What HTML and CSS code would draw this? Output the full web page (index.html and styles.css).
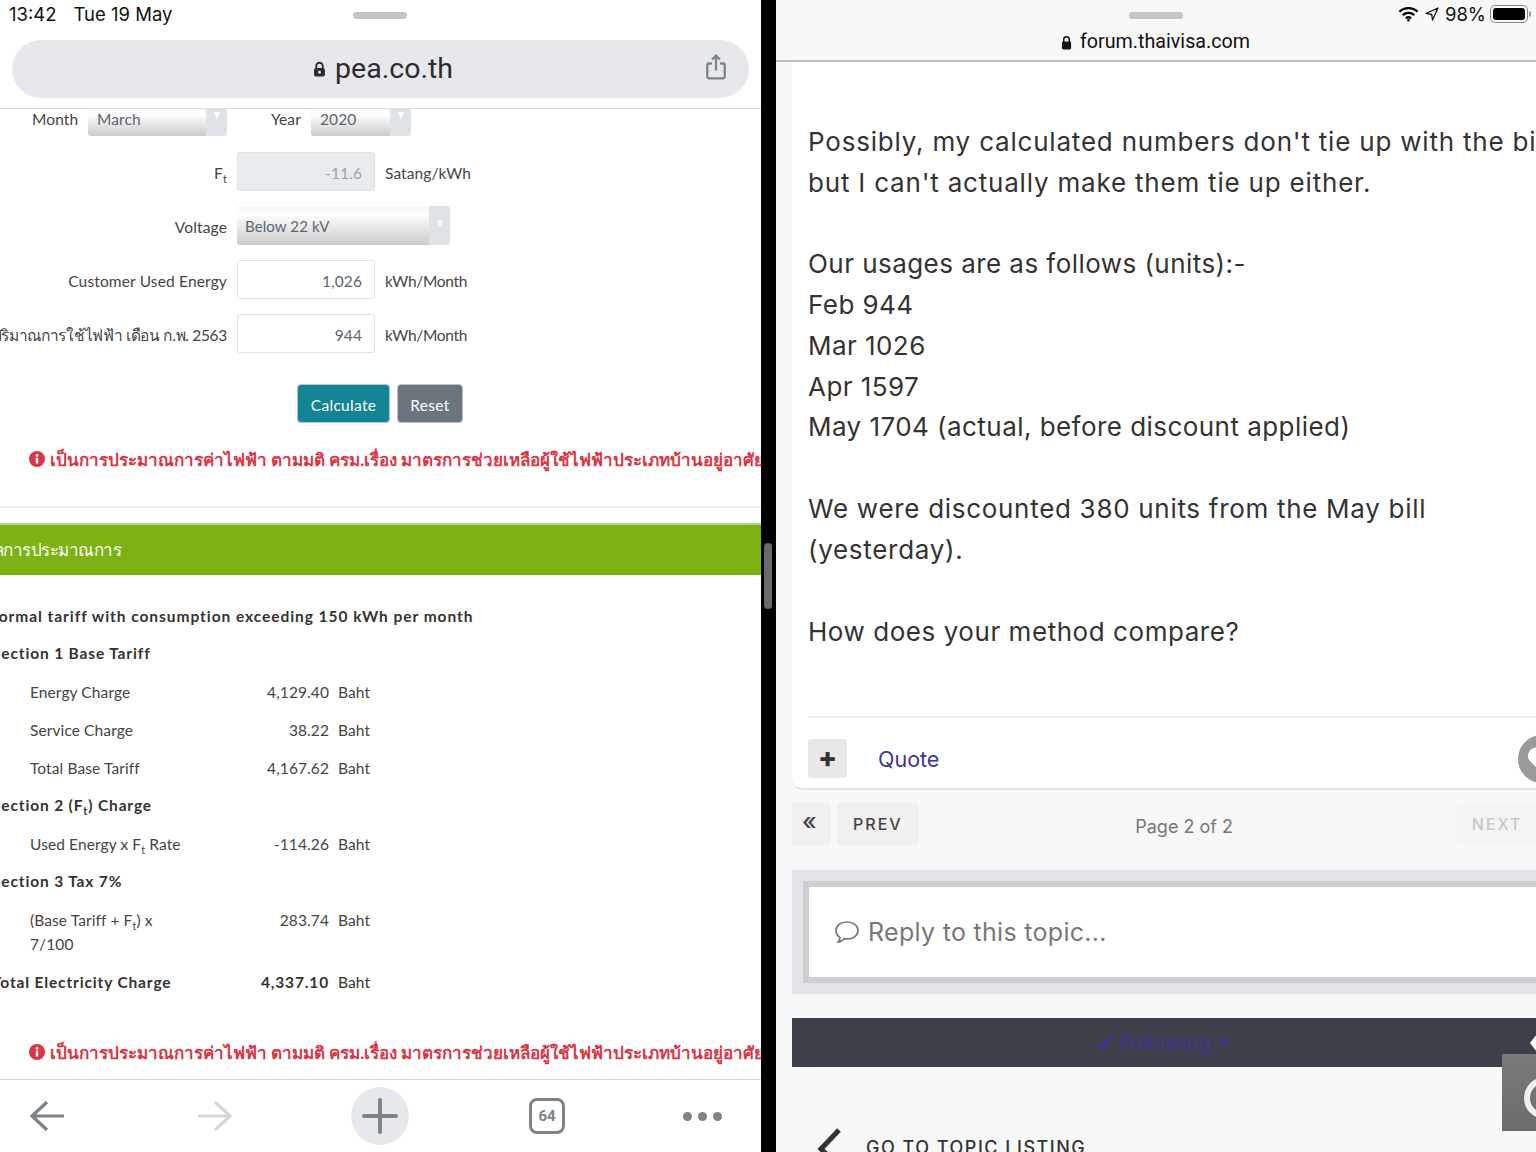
FILE: index.html
```html
<!DOCTYPE html>
<html lang="en">
<head>
  <meta charset="UTF-8">
  <title>Split view</title>
  <link rel="stylesheet" href="styles.css">
</head>
<body>
  <div class="screen">

    <section class="pane-left">
      <header class="left-head">
        <div class="status-left">
          <span class="clock">13:42</span>
          <span class="clock">Tue 19 May</span>
          <span class="grabber"></span>
        </div>
        <div class="url-bar">
          <span class="url-text">
            <svg class="lock-big" viewBox="0 0 12 14"><path d="M3 6V4.200a3 3 0 0 1 6 0V6" fill="none" stroke="#2c2c2e" stroke-width="1.700"/><rect x="1" y="6" width="10" height="8" rx="1.600" fill="#2c2c2e"/><circle cx="6" cy="10" r="1.300" fill="#e6e8ec"/></svg>
            pea.co.th
          </span>
          <svg class="share" viewBox="0 0 24 32"><path d="M7.500 12H3.500a1.500 1.500 0 0 0-1.500 1.500v14A1.500 1.500 0 0 0 3.500 29h17a1.500 1.500 0 0 0 1.500-1.500v-14A1.500 1.500 0 0 0 20.500 12H16.500M12 20V3M7.500 7.500 12 3l4.500 4.500" fill="none" stroke="#7c8487" stroke-width="2.600"/></svg>
        </div>
      </header>

      <main class="left-body">
        <div class="month-row">
          <span class="month-label">Month</span>
          <span class="select select-month">March</span>
          <span class="year-label">Year</span>
          <span class="select select-year">2020</span>
        </div>

        <div class="form-row form-row-first">
          <label class="form-label"><span>F<sub>t</sub></span></label>
          <span class="input input-off">-11.6</span>
          <span class="form-unit">Satang/kWh</span>
        </div>
        <div class="form-row">
          <label class="form-label"><span>Voltage</span></label>
          <span class="select select-voltage">Below 22 kV</span>
        </div>
        <div class="form-row">
          <label class="form-label"><span>Customer Used Energy</span></label>
          <span class="input">1,026</span>
          <span class="form-unit form-unit-month">kWh/Month</span>
        </div>
        <div class="form-row">
          <label class="form-label form-label-thai"><span>ปริมาณการใช้ไฟฟ้า เดือน ก.พ. 2563</span></label>
          <span class="input">944</span>
          <span class="form-unit form-unit-month">kWh/Month</span>
        </div>

        <div class="actions">
          <button class="btn btn-teal">Calculate</button>
          <button class="btn btn-grey">Reset</button>
        </div>

        <p class="warn warn-top">
          <svg class="warn-icon" viewBox="0 0 16 16"><circle cx="8" cy="8" r="8" fill="#dc3545"/><rect x="6.800" y="6.800" width="2.400" height="5.700" fill="#fff"/><circle cx="8" cy="4.500" r="1.400" fill="#fff"/></svg>
          เป็นการประมาณการค่าไฟฟ้า ตามมติ ครม.เรื่อง มาตรการช่วยเหลือผู้ใช้ไฟฟ้าประเภทบ้านอยู่อาศัย
        </p>
        <div class="rule"></div>

        <div class="result-head">ผลการประมาณการ</div>

        <div class="result">
          <div class="result-title">Normal tariff with consumption exceeding 150 kWh per month</div>
          <div class="result-sub">Section 1 Base Tariff</div>
          <div class="line"><span class="line-name">Energy Charge</span><span class="line-val">4,129.40</span><span>Baht</span></div>
          <div class="line"><span class="line-name">Service Charge</span><span class="line-val">38.22</span><span>Baht</span></div>
          <div class="line"><span class="line-name">Total Base Tariff</span><span class="line-val">4,167.62</span><span>Baht</span></div>
          <div class="result-sub">Section 2 (F<sub>t</sub>) Charge</div>
          <div class="line"><span class="line-name">Used Energy x F<sub>t</sub> Rate</span><span class="line-val">-114.26</span><span>Baht</span></div>
          <div class="result-sub">Section 3 Tax 7%</div>
          <div class="line line-tall"><span class="line-name">(Base Tariff + F<sub>t</sub>) x<br>7/100</span><span class="line-val">283.74</span><span>Baht</span></div>
          <div class="result-sub result-total"><span class="total-name">Total Electricity Charge</span><span class="line-val">4,337.10</span><span class="total-unit">Baht</span></div>
        </div>

        <p class="warn warn-bottom">
          <svg class="warn-icon" viewBox="0 0 16 16"><circle cx="8" cy="8" r="8" fill="#dc3545"/><rect x="6.800" y="6.800" width="2.400" height="5.700" fill="#fff"/><circle cx="8" cy="4.500" r="1.400" fill="#fff"/></svg>
          เป็นการประมาณการค่าไฟฟ้า ตามมติ ครม.เรื่อง มาตรการช่วยเหลือผู้ใช้ไฟฟ้าประเภทบ้านอยู่อาศัย
        </p>
      </main>

      <footer class="toolbar">
        <svg class="tool" viewBox="0 0 38 34"><path d="M35 17H4M18 3 3 17l15 14" fill="none" stroke="#7c8487" stroke-width="3.200"/></svg>
        <svg class="tool" viewBox="0 0 38 34"><path d="M3 17h31M20 3l15 14-15 14" fill="none" stroke="#d5d7d8" stroke-width="3.200"/></svg>
        <span class="plus-circle">
          <svg class="plus-icon" viewBox="0 0 36 36"><path d="M18 2v32M2 18h32" fill="none" stroke="#7c8487" stroke-width="4" stroke-linecap="round"/></svg>
        </span>
        <span class="tab-count">64</span>
        <span class="dots"><i></i><i></i><i></i></span>
      </footer>
    </section>

    <div class="divider"><span class="divider-handle"></span></div>

    <section class="pane-right">
      <header class="right-head">
        <span class="grabber grabber-right"></span>
        <div class="status-right">
          <svg class="wifi" viewBox="0 0 22 16"><path d="M1.500 5.500a14 14 0 0 1 19 0M5 9.200a9 9 0 0 1 12 0M8.300 12.500a4.200 4.200 0 0 1 5.400 0" fill="none" stroke="#000" stroke-width="2.400"/><circle cx="11" cy="14.600" r="1.300"/></svg>
          <svg class="loc" viewBox="0 0 14 14"><path d="M13 1 1 6.500l5.700.8.800 5.700z" fill="none" stroke="#000" stroke-width="1.200" stroke-linejoin="round"/></svg>
          <span class="clock">98%</span>
          <span class="battery"><i></i></span>
        </div>
        <div class="site">
          <svg class="lock-small" viewBox="0 0 12 15"><path d="M3 7V4.200a3 3 0 0 1 6 0V7" fill="none" stroke="#111" stroke-width="1.600"/><rect x="1" y="6.500" width="10" height="8.500" rx="1.500" fill="#111"/></svg>
          forum.thaivisa.com
        </div>
      </header>

      <main class="right-body">
        <article class="post">
          <div class="post-text">
            <p class="para-wide">Possibly, my calculated numbers don't tie up with the bill<br>but I can't actually make them tie up either.</p>
            <p class="para-tight">Our usages are as follows (units):-<br>Feb 944<br>Mar 1026<br>Apr 1597<br>May 1704 (actual, before discount applied)</p>
            <p class="para-mid">We were discounted 380 units from the May bill<br>(yesterday).</p>
            <p>How does your method compare?</p>
          </div>
          <div class="post-foot">
            <span class="plus-btn">+</span>
            <a class="quote">Quote</a>
            <span class="like"><svg class="heart" viewBox="0 0 24 22"><path d="M12 21 3 11.500a5.800 5.800 0 0 1 9-7 5.800 5.800 0 0 1 9 7z" fill="#fff"/></svg></span>
          </div>
        </article>

        <nav class="pager">
          <span class="page-btn page-first">«</span>
          <span class="page-btn">PREV</span>
          <span class="page-count">Page 2 of 2</span>
          <span class="page-btn page-next">NEXT</span>
        </nav>

        <div class="reply-wrap">
          <div class="reply-box">
            <svg class="bubble" viewBox="0 0 26 24"><path d="M13 2c6.500 0 11 3.600 11 8.500S19.500 19 13 19c-1 0-2-.1-3-.3C8.500 20.500 6.500 22 4 22c1.300-1.300 2-2.800 2-4.600-2.600-1.500-4-4-4-6.900C2 5.600 6.500 2 13 2z" fill="none" stroke="#777" stroke-width="1.700"/></svg>
            Reply to this topic...
          </div>
        </div>

        <div class="follow-bar">
          <span class="follow">
            <svg class="follow-check" viewBox="0 0 16 14"><path d="M1.500 7.500 6 12 14.500 2" fill="none" stroke="#3d3694" stroke-width="3.400"/></svg>
            Following
            <span class="follow-caret"></span>
          </span>
          <span class="follow-tip"></span>
        </div>

        <div class="back-link">
          <svg class="back-chevron" viewBox="0 0 26 40"><path d="M23 3 5 22l18 17" fill="none" stroke="#333" stroke-width="5"/></svg>
          <span class="back-text">GO TO TOPIC LISTING</span>
        </div>
      </main>

      <div class="float-box"><span class="float-circle"></span></div>
    </section>
  </div>
</body>
</html>
```

FILE: styles.css
```css
html, body {
  margin: 0;
  padding: 0;
  height: 100%;
  overflow: hidden;
}

body {
  font-family: "Lato", "Noto Sans", "DejaVu Sans", sans-serif;
  color: #333;
  background: #000;
}

.screen {
  display: flex;
  width: 1536px;
  height: 1152px;
}

/* left pane */

.pane-left {
  width: 761px;
  height: 1152px;
  display: flex;
  flex-direction: column;
  overflow: hidden;
  background: #fff;
  flex: none;
}

.left-head {
  height: 108px;
  border-bottom: 1px solid #dcdcdc;
  padding: 0 12px;
  flex: none;
}

.status-left {
  display: flex;
  gap: 17px;
  height: 40px;
  margin-left: -3px;
  padding-top: 3px;
  box-sizing: border-box;
}

.clock {
  font-family: "Inter", "Roboto", sans-serif;
  font-size: 18.500px;
  line-height: 22px;
  color: #111;
}

.grabber {
  position: absolute;
  left: 353px;
  top: 12px;
  width: 54px;
  height: 7px;
  border-radius: 4px;
  background: #c4c4c6;
}

.url-bar {
  height: 58px;
  width: 737px;
  border-radius: 29px;
  background: #e6e8ec;
  display: flex;
  align-items: center;
  justify-content: center;
  position: relative;
}

.url-text {
  display: flex;
  align-items: center;
  gap: 9px;
  font-family: "Roboto", sans-serif;
  font-size: 28.500px;
  line-height: 56px;
  margin-left: 5px;
  color: #2c2c2e;
}

.lock-big {
  width: 13px;
  height: 16px;
}

.share {
  position: absolute;
  right: 21px;
  top: 13px;
  width: 24px;
  height: 28px;
}

.left-body {
  flex: 1;
  overflow: hidden;
  font-size: 15.500px;
  letter-spacing: 0.100px;
  color: #444;
}

.month-row {
  display: flex;
  height: 27px;
  padding-left: 32px;
  line-height: 20px;
}

.month-label {
  width: 56px;
}

.year-label {
  width: 40px;
  margin-left: 44px;
}

.select {
  display: flex;
  align-items: center;
  box-sizing: border-box;
  padding-left: 9px;
  color: #5c6670;
  border-radius: 0 0 3px 3px;
  background:
    linear-gradient(#dfe3e8, #dfe3e8) right / 21px 100% no-repeat,
    linear-gradient(#f6f6f6, #fff 20%, #cbcbcb);
  position: relative;
}

.select::after {
  content: "";
  position: absolute;
  right: 7px;
  top: 3px;
  border-left: 3.500px solid transparent;
  border-right: 3.500px solid transparent;
  border-top: 7px solid #fff;
}

.select-month {
  width: 139px;
  height: 27px;
  padding-bottom: 7px;
}

.select-year {
  width: 100px;
  height: 27px;
  padding-bottom: 7px;
}

.select-voltage {
  width: 213px;
  height: 39px;
  border-radius: 3px;
  padding-left: 8px;
  font-size: 15px;
}

.select-voltage::after {
  top: 14px;
}

.form-row {
  display: flex;
  align-items: center;
  height: 39px;
  margin-top: 15px;
}

.form-row-first {
  margin-top: 16px;
}

.form-label {
  width: 227px;
  flex: none;
  display: flex;
  justify-content: flex-end;
  white-space: nowrap;
  margin-right: 10px;
  padding-top: 2px;
  letter-spacing: 0.150px;
}

.form-label-thai {
  letter-spacing: -0.300px;
  padding-top: 3px;
}

.form-label sub,
.line-name sub,
.result-sub sub {
  font-size: 70%;
  line-height: 0;
}

.input {
  width: 138px;
  height: 39px;
  box-sizing: border-box;
  border: 1px solid #dfe3e8;
  border-radius: 3px;
  padding: 2px 12px 0 0;
  display: flex;
  align-items: center;
  justify-content: flex-end;
  color: #5c6670;
}

.input-off {
  background: #e9ecef;
  color: #99a3ad;
}

.form-unit {
  margin-left: 10px;
  padding-top: 2px;
}

.form-unit-month {
  letter-spacing: -0.300px;
}

.actions {
  display: flex;
  gap: 7px;
  margin-top: 31px;
  padding-left: 297px;
}

.btn {
  height: 39px;
  font: inherit;
  letter-spacing: 0.300px;
  color: #fff;
  border: 1px solid #b8c4c8;
  border-radius: 4px;
  padding: 2px 0 0;
}

.btn-teal {
  width: 93px;
  background: #138496;
}

.btn-grey {
  width: 66px;
  background: #6c757d;
}

.warn {
  margin: 0;
  display: flex;
  align-items: center;
  gap: 5px;
  padding-left: 29px;
  height: 28px;
  white-space: nowrap;
  color: #dc3545;
  font-size: 17px;
  font-weight: 700;
  letter-spacing: 0;
}

.warn-top {
  margin-top: 22px;
}

.warn-icon {
  width: 16px;
  height: 16px;
  flex: none;
}

.rule {
  height: 2px;
  background: #f1f1f1;
  margin-top: 33px;
}

.result-head {
  height: 50px;
  margin-top: 15px;
  border-top: 2px solid #b9d58a;
  background: #7cb212;
  color: #fff;
  font-size: 17px;
  letter-spacing: -0.500px;
  line-height: 50px;
  text-indent: -16px;
  white-space: nowrap;
}

.result {
  display: flex;
  flex-direction: column;
  padding-top: 22px;
}

.result-title {
  height: 38px;
  line-height: 38px;
  font-weight: 700;
  letter-spacing: 0.950px;
  margin-left: -14px;
  color: #333;
  white-space: nowrap;
}

.result-sub {
  height: 38px;
  line-height: 36px;
  font-weight: 700;
  letter-spacing: 0.850px;
  margin-left: -8px;
  color: #333;
}

.line {
  display: flex;
  align-items: center;
  height: 38px;
  padding-left: 30px;
}

.line-name {
  width: 200px;
}

.line-val {
  width: 99px;
  text-align: right;
  margin-right: 9px;
}

.line-tall {
  height: 59px;
  box-sizing: border-box;
  line-height: 24px;
  align-items: flex-start;
  padding-top: 7px;
}

.result-total {
  margin-top: 4px;
  display: flex;
}

.total-name {
  width: 238px;
}

.total-unit {
  font-weight: 400;
  letter-spacing: 0.100px;
}

.warn-bottom {
  margin-top: 36px;
}

.toolbar {
  height: 72px;
  flex: none;
  border-top: 1px solid #d8d8d8;
  display: flex;
  align-items: center;
  background: #fff;
  padding-left: 29px;
}

.tool {
  width: 38px;
  height: 34px;
  margin-right: 128px;
}

.plus-circle {
  width: 58px;
  height: 58px;
  border-radius: 50%;
  background: #e6e8ec;
  display: flex;
  align-items: center;
  justify-content: center;
  margin-left: -10px;
}

.plus-icon {
  width: 36px;
  height: 36px;
}

.tab-count {
  width: 36px;
  height: 36px;
  box-sizing: border-box;
  margin-left: 120px;
  border: 3px solid #7c8487;
  border-radius: 8px;
  display: flex;
  align-items: center;
  justify-content: center;
  font-family: "Roboto", sans-serif;
  font-size: 15px;
  font-weight: 700;
  color: #7c8487;
}

.dots {
  display: flex;
  gap: 6px;
  margin-left: 118px;
}

.dots i {
  width: 9px;
  height: 9px;
  border-radius: 50%;
  background: #7c8487;
}

/* divider */

.divider {
  width: 15px;
  flex: none;
  background: #000;
  position: relative;
}

.divider-handle {
  position: absolute;
  left: 3px;
  top: 543px;
  width: 8px;
  height: 66px;
  border-radius: 4px;
  background: #6a6a6a;
}

/* right pane */

.pane-right {
  flex: 1;
  min-width: 0;
  position: relative;
  overflow: hidden;
  background: #f7f8fa;
}

.right-head {
  height: 60px;
  border-bottom: 2px solid #c0c0c0;
  background: #f8f8f8;
  position: relative;
}

.grabber-right {
  left: 353px;
}

.status-right {
  position: absolute;
  right: 3px;
  top: 3px;
  display: flex;
  align-items: center;
  gap: 6px;
}

.wifi {
  width: 21px;
  height: 16px;
}

.loc {
  width: 14px;
  height: 14px;
}

.battery {
  width: 38px;
  height: 18px;
  box-sizing: border-box;
  border: 1px solid #888;
  border-radius: 5px;
  padding: 2px;
  display: flex;
  margin-left: -2px;
  margin-right: 5px;
  position: relative;
}

.battery::after {
  content: "";
  position: absolute;
  right: -4px;
  top: 5px;
  width: 2px;
  height: 6px;
  border-radius: 0 2px 2px 0;
  background: #999;
}

.battery i {
  flex: 1;
  background: #000;
  border-radius: 3px;
}

.site {
  position: absolute;
  left: 285px;
  top: 29px;
  display: flex;
  align-items: center;
  gap: 8px;
  font-family: "Roboto", sans-serif;
  font-size: 19.700px;
  line-height: 26px;
  color: #111;
}

.lock-small {
  width: 11px;
  height: 15px;
}

.right-body {
  padding-left: 16px;
  font-family: "Inter", "Noto Sans", sans-serif;
}

.post {
  width: 800px;
  height: 728px;
  box-sizing: border-box;
  background: #fff;
  border-radius: 0 0 0 10px;
  border-bottom: 2px solid #e2e2e2;
  padding: 60px 0 0 16px;
}

.post-text {
  height: 594px;
  font-size: 26px;
  line-height: 40.900px;
  letter-spacing: 0.550px;
  color: #333;
  white-space: nowrap;
}

.post-text p {
  margin: 0 0 40.900px;
}

.post-text .para-wide {
  margin-bottom: 40px;
  letter-spacing: 0.800px;
}

.post-text .para-tight {
  letter-spacing: 0.450px;
}

.post-text .para-mid {
  letter-spacing: 0.700px;
}

.post-foot {
  border-top: 2px solid #eee;
  display: flex;
  align-items: center;
  padding-top: 21px;
  position: relative;
}

.plus-btn {
  width: 39px;
  height: 39px;
  border-radius: 3px;
  background: #e8e8e8;
  color: #333;
  font-size: 28px;
  font-weight: 800;
  line-height: 38px;
  text-align: center;
}

.quote {
  margin-left: 31px;
  color: #3d3694;
  font-size: 21.500px;
}

.like {
  position: absolute;
  left: 710px;
  top: 17px;
  width: 48px;
  height: 48px;
  box-sizing: border-box;
  border-radius: 50%;
  background: #9a9a9a;
  display: flex;
  align-items: center;
  justify-content: center;
}

.heart {
  width: 38px;
  height: 32px;
  flex: none;
}

.pager {
  display: flex;
  align-items: center;
  gap: 6px;
  height: 42px;
  margin-top: 13px;
}

.page-btn {
  height: 42px;
  padding: 0 16px;
  background: #f0f0f0;
  border-radius: 3px;
  font-size: 16px;
  font-weight: 500;
  letter-spacing: 2px;
  line-height: 42px;
  color: #444;
  flex: none;
}

.page-first {
  width: 39px;
  box-sizing: border-box;
  padding: 0 10px;
  font-size: 24px;
  line-height: 38px;
  letter-spacing: 0;
}

.page-count {
  width: 519px;
  flex: none;
  text-align: center;
  font-size: 18px;
  color: #777;
  padding-top: 4px;
}

.page-next {
  width: 90px;
  box-sizing: border-box;
  padding: 0 15px;
  margin-left: 7px;
  color: #c8c8c8;
  background: #f3f4f5;
}

.reply-wrap {
  width: 800px;
  height: 124px;
  box-sizing: border-box;
  margin-top: 25px;
  padding: 11px;
  background: #e2e4e8;
}

.reply-box {
  height: 102px;
  box-sizing: border-box;
  border: 6px solid #cdcfd3;
  border-right: 0;
  background: #fff;
  display: flex;
  align-items: center;
  padding-left: 25px;
  gap: 8px;
  font-size: 25px;
  letter-spacing: 0.300px;
  color: #777;
  white-space: nowrap;
}

.bubble {
  width: 26px;
  height: 24px;
  flex: none;
}

.follow-bar {
  width: 800px;
  height: 49px;
  margin-top: 24px;
  background: #3d4049;
  position: relative;
  display: flex;
  align-items: center;
  padding-left: 304px;
  box-sizing: border-box;
}

.follow {
  color: #3d3694;
  font-size: 20.500px;
  display: flex;
  align-items: center;
  gap: 7px;
}

.follow-check {
  width: 17px;
  height: 15px;
}

.follow-caret {
  border-left: 5px solid transparent;
  border-right: 5px solid transparent;
  border-top: 7px solid #3d3694;
}

.follow-tip {
  position: absolute;
  left: 738px;
  top: 16px;
  width: 14px;
  height: 18px;
  background: #fff;
  clip-path: polygon(50% 0, 100% 50%, 50% 100%, 0 50%);
}

.back-link {
  display: flex;
  align-items: flex-start;
  gap: 24px;
  margin-top: 60px;
  padding-left: 24px;
}

.back-chevron {
  width: 26px;
  height: 40px;
  flex: none;
}

.back-text {
  font-size: 18px;
  font-weight: 500;
  letter-spacing: 1.500px;
  color: #333;
  margin-top: 10px;
}

.float-box {
  position: absolute;
  left: 726px;
  top: 1054px;
  width: 60px;
  height: 77px;
  background: linear-gradient(#7a7a7a, #6c6c6c);
}

.float-circle {
  position: absolute;
  left: 22px;
  top: 23px;
  width: 30px;
  height: 30px;
  border-radius: 50%;
  border: 6px solid #eee;
}
```
